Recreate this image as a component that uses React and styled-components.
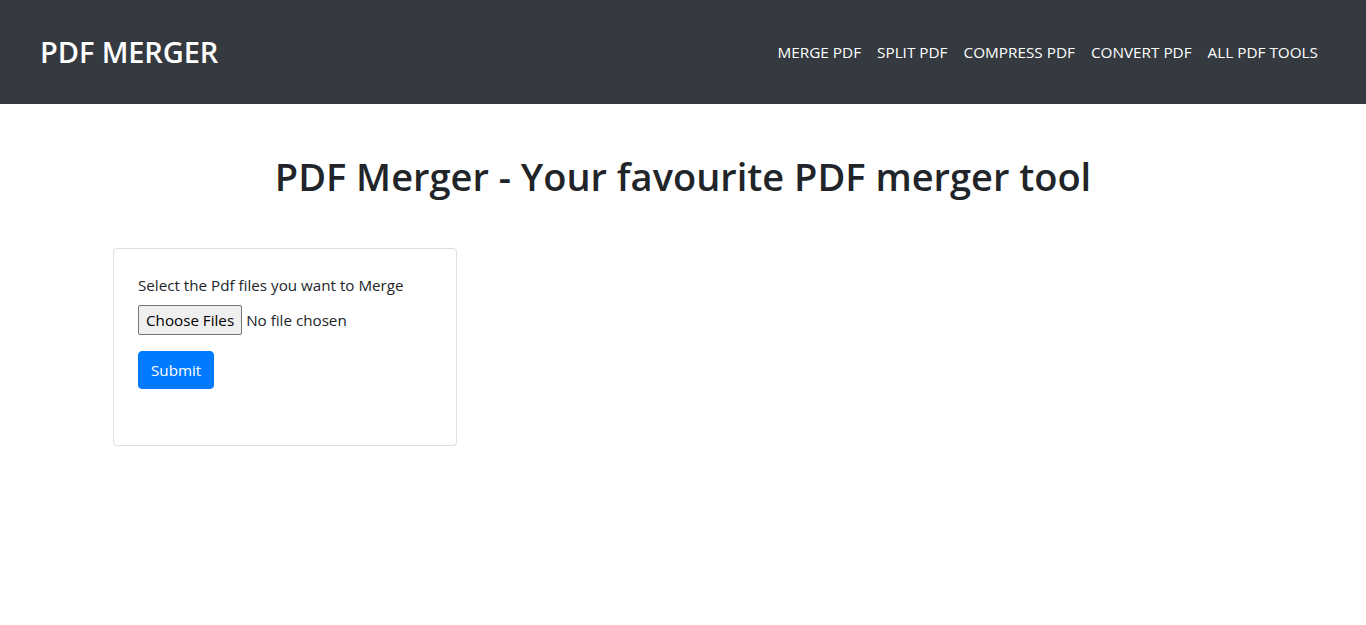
import styled, { createGlobalStyle } from 'styled-components';

const GlobalStyle = createGlobalStyle`
  * {
    box-sizing: border-box;
  }
  body {
    margin: 0;
    font-family: "Open Sans", "Noto Sans", Arial, sans-serif;
    font-size: 16px;
    line-height: 1.5;
    color: #212529;
    background: #fff;
  }
`;

const Navbar = styled.nav`
  height: 104px;
  background-color: #343a40;
  display: flex;
  align-items: center;
  justify-content: space-between;
  padding: 0 40px;
`;

const Brand = styled.a`
  color: #fff;
  font-size: 29px;
  font-weight: 600;
  text-decoration: none;
  letter-spacing: -0.1px;
`;

const NavList = styled.ul`
  display: flex;
  list-style: none;
  margin: 0;
  padding: 0;
`;

const NavLink = styled.a`
  display: block;
  padding: 8px;
  color: #fff;
  font-size: 15.3px;
  text-decoration: none;
`;

const Main = styled.main`
  padding: 0 113px;
`;

const Title = styled.h1`
  margin: 50px 0 48px;
  text-align: center;
  font-size: 38px;
  font-weight: 600;
  line-height: 1.2;
  color: #212529;
`;

const Card = styled.div`
  width: 344px;
  height: 198px;
  border: 1px solid rgba(0, 0, 0, 0.125);
  border-radius: 4px;
  padding: 25px 24px;
`;

const Form = styled.form`
  display: flex;
  flex-direction: column;
  align-items: flex-start;
`;

const Label = styled.label`
  font-size: 15.2px;
  margin-bottom: 9px;
`;

const FileRow = styled.div`
  display: flex;
  align-items: center;
  gap: 4px;
  font-size: 15.2px;
`;

const FileButton = styled.button`
  height: 30px;
  padding: 0 7px;
  font-family: inherit;
  font-size: 15.2px;
  color: #000;
  background: #efefef;
  border: 1px solid #767676;
  border-radius: 2px;
`;

const SubmitButton = styled.button`
  margin-top: 16px;
  height: 38px;
  padding: 0 12px;
  font-family: inherit;
  font-size: 15.2px;
  color: #fff;
  background-color: #007bff;
  border: 1px solid #007bff;
  border-radius: 4px;
`;

const links = ['MERGE PDF', 'SPLIT PDF', 'COMPRESS PDF', 'CONVERT PDF', 'ALL PDF TOOLS'];

const App = () => {
  return (
    <>
      <GlobalStyle />
      <Navbar>
        <Brand href="#">PDF MERGER</Brand>
        <NavList>
          {links.map((link) => (
            <li key={link}>
              <NavLink href="#">{link}</NavLink>
            </li>
          ))}
        </NavList>
      </Navbar>
      <Main>
        <Title>PDF Merger - Your favourite PDF merger tool</Title>
        <Card>
          <Form onSubmit={(e) => e.preventDefault()}>
            <Label>Select the Pdf files you want to Merge</Label>
            <FileRow>
              <FileButton type="button">Choose Files</FileButton>
              <span>No file chosen</span>
            </FileRow>
            <SubmitButton type="submit">Submit</SubmitButton>
          </Form>
        </Card>
      </Main>
    </>
  );
};

export default App;
